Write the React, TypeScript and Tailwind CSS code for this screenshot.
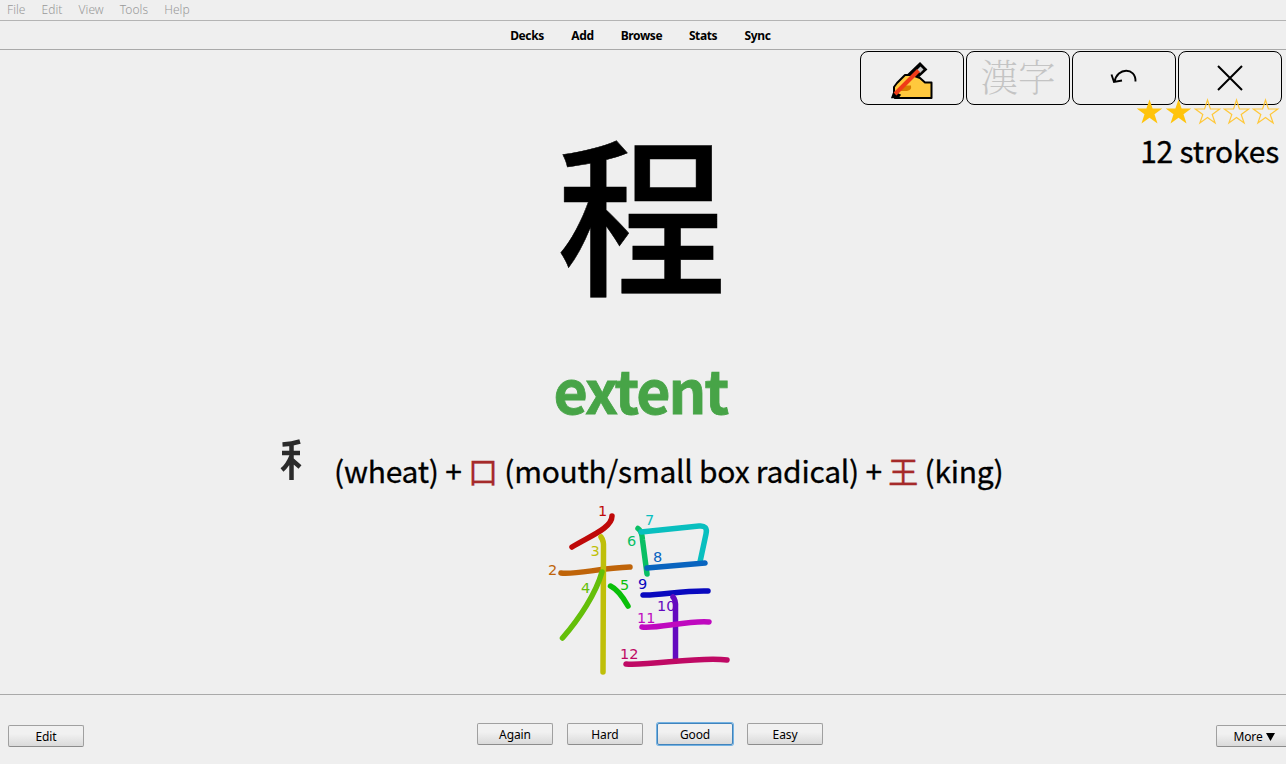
import type { ReactNode } from "react";

const menus = ["File", "Edit", "View", "Tools", "Help"];
const links = [
  { label: "Decks", width: "w-[34px]" },
  { label: "Add", width: "w-[23px]" },
  { label: "Browse", width: "w-[41px]" },
  { label: "Stats", width: "w-[28px]" },
  { label: "Sync", width: "w-[27px]" },
];
const answers = ["Again", "Hard", "Good", "Easy"];

const strokes = [
  { d: "M612 516C612 528 590 536 572 547", color: "#bf0909" },
  { d: "M561 573C575 575 600 568 630 567", color: "#bf6409" },
  { d: "M601 537Q604 541 603.500 548L603 672", color: "#bfbf09" },
  { d: "M602 572C596 593 580 618 562.500 638", color: "#64bf09" },
  { d: "M610.500 586Q619 590 628 606", color: "#09bf09" },
  { d: "M638 528.500Q642 531 642.500 540L647 574", color: "#09bf64" },
  { d: "M641 532L699 526Q708 525 706 534L700 562", color: "#09bfbf" },
  { d: "M647 568L705 563", color: "#0964bf" },
  { d: "M643 595C657 596 685 590 708 591", color: "#0909bf" },
  { d: "M673 597Q676 600 675.500 608L675.500 659", color: "#6409bf" },
  { d: "M642 627C656 629 690 620 709 622", color: "#bf09bf" },
  { d: "M626 664C650 666 700 656 727 660", color: "#bf0964" },
];
const numbers = [
  [598, 516], [548, 575], [590.5, 556], [581, 593], [620, 590], [627, 546],
  [645, 525], [653, 562], [638, 589], [657, 611], [637, 623], [620, 659],
];

function Star({ filled }: { filled?: boolean }) {
  return (
    <svg width="29" height="28" viewBox="0 0 29 28">
      <path
        d={filled
          ? "M14.500 2.500l3.100 9h9.700l-7.800 5.700 3 9.300-8-5.700-8 5.700 3-9.300-7.800-5.700h9.700z"
          : "M14.500 3l2.900 9h9.300l-7.500 5.500 2.900 8.500-7.600-5.400-7.600 5.400 2.900-8.500-7.500-5.500h9.300z"}
        fill={filled ? "#ffc40c" : "none"}
        stroke={filled ? "none" : "#ffc83a"}
        strokeWidth="1.2"
      />
    </svg>
  );
}

function ToolButton({ children }: { children: ReactNode }) {
  return (
    <button className="flex h-[54px] w-[104px] items-center justify-center rounded-lg border border-black">
      {children}
    </button>
  );
}

function PushButton({ label, focused }: { label: ReactNode; focused?: boolean }) {
  return (
    <button
      className={
        "flex h-[22px] w-[76px] shrink-0 items-center justify-center rounded-[2px] border bg-linear-to-b from-[#f1f1f1] from-40% to-[#dadada] pt-px text-[12px] tracking-[-0.1px] " +
        (focused ? "border-[#4084bd] ring-1 ring-[#74b2e2]" : "border-[#a0a0a0] border-b-[#8c8c8c]")
      }
    >
      {label}
    </button>
  );
}

function WritingHand() {
  return (
    <svg width="44" height="38" viewBox="0 0 44 38" className="mt-[6px]">
      <path d="M4 30V25L7 21 15 13H22L30 16 35 20.500H41.500V36H5Z" fill="#ffc83d" stroke="black" strokeWidth="2" strokeLinejoin="round" />
      <path d="M12 23.500H21Q22 28 17 29H8Z" fill="#d67d00" />
      <path d="M19 12L30 1.500 36 7.500 29 14Z" fill="black" stroke="black" strokeWidth="2" />
      <path d="M27 8L30.500 4.500 33.500 7.500 30 11Z" fill="#c8cacb" />
      <path d="M4 30L2 35.500H8L10 33Z" fill="black" stroke="black" strokeWidth="1.500" />
      <path d="M5 32L28.500 8.500" stroke="#f03a17" strokeWidth="4" fill="none" />
    </svg>
  );
}

function StrokeDiagram() {
  return (
    <svg width="200" height="185" viewBox="540 495 200 185" className="ml-[540px]">
      {strokes.map((s) => (
        <path key={s.color} d={s.d} stroke={s.color} strokeWidth="5.500" fill="none" strokeLinecap="round" strokeLinejoin="round" />
      ))}
      {numbers.map(([x, y], i) => (
        <text key={i} x={x} y={y} fill={strokes[i].color} fontSize="14.500" fontFamily="DejaVu Sans, sans-serif">
          {i + 1}
        </text>
      ))}
    </svg>
  );
}

export default function App() {
  return (
    <div className="flex h-[764px] w-[1286px] flex-col overflow-hidden bg-[#efefef] font-['Noto_Sans','Noto_Sans_CJK_JP',sans-serif] text-black">
      <nav className="flex h-[21px] gap-[16px] border-b border-[#b4b4b4] pl-[7px] text-[12px] leading-[20px] font-light tracking-[0.06px] text-[#999]">
        {menus.map((m) => <span key={m}>{m}</span>)}
      </nav>
      <nav className="flex h-[29px] items-center justify-center gap-[27px] border-b border-[#a9a9a9] pt-[2px] pr-[5px] text-[12px] font-bold">
        {links.map((l) => (
          <span key={l.label} className={"flex justify-center tracking-[-0.4px] " + l.width}>{l.label}</span>
        ))}
      </nav>
      <main className="relative flex h-[644px] flex-col font-['Noto_Sans_CJK_JP',sans-serif]">
        <div className="absolute top-[1px] right-[4px] flex gap-[2px]">
          <ToolButton><WritingHand /></ToolButton>
          <ToolButton>
            <span className="-mt-[5px] font-['Noto_Serif_CJK_JP','Noto_Sans_CJK_JP',serif] text-[37.500px] leading-none font-thin text-[#c4c4c4]">漢字</span>
          </ToolButton>
          <ToolButton>
            <svg width="28" height="20" viewBox="0 0 28 20" fill="none" stroke="black" strokeWidth="1.900">
              <path d="M25.500 13.500C26-1 7-1 4.500 14M1.500 6.500L4 14 12 12.500" />
            </svg>
          </ToolButton>
          <ToolButton>
            <svg width="28" height="28" viewBox="0 0 28 28" stroke="black" strokeWidth="2">
              <path d="M2 2L26 26M26 2L2 26" />
            </svg>
          </ToolButton>
        </div>
        <div className="absolute top-[47px] right-[7px] flex flex-col items-end">
          <div className="-mr-[0.5px] flex">
            <Star filled /><Star filled /><Star /><Star /><Star />
          </div>
          <div className="mt-[2px] text-[30px] leading-[46px] tracking-[-0.2px] [-webkit-text-stroke:0.3px_black]">12 strokes</div>
        </div>
        <h1 className="mt-[60px] h-[200px] pr-[3px] text-center text-[170px] leading-[199px] font-medium [-webkit-text-stroke:0.5px_black]">程</h1>
        <h2 className="mt-[39px] h-[80px] pr-[5px] text-center text-[59px] leading-[80px] font-bold tracking-[-1.900px] text-[#47a447] [-webkit-text-stroke:0.8px_#47a447]">extent</h2>
        <div className="mt-[10px] flex h-[56px] items-start pl-[280px] text-[30px] leading-[62px] tracking-[-0.250px] whitespace-nowrap">
          <svg width="22" height="42" viewBox="0 0 22 42" fill="none" stroke="#2b2b2b" strokeWidth="4.500" className="mr-[32px] shrink-0">
            <path d="M2.500 5.500Q12 5 20 2.500M2 14H20M11.500 5V41M11.500 17Q8 26 2 31M12 21L20 28" />
          </svg>
          <span className="[-webkit-text-stroke:0.3px]">(wheat) + <span className="text-[#a52a2a]">口</span> (mouth/small box radical) + <span className="text-[#a52a2a]">王</span> (king)</span>
        </div>
        <StrokeDiagram />
      </main>
      <footer className="flex h-[70px] justify-between border-t border-[#a9a9a9] pl-[8px]">
        <div className="pt-[30px]"><PushButton label="Edit" /></div>
        <div className="flex gap-[14px] pt-[28px]">
          {answers.map((a) => <PushButton key={a} label={a} focused={a === "Good"} />)}
        </div>
        <div className="-mr-[6px] pt-[30px]">
          <PushButton label={<>More&nbsp;<svg width="9" height="9" viewBox="0 0 9 9"><path d="M0 1H9L4.500 9Z" /></svg></>} />
        </div>
      </footer>
    </div>
  );
}
